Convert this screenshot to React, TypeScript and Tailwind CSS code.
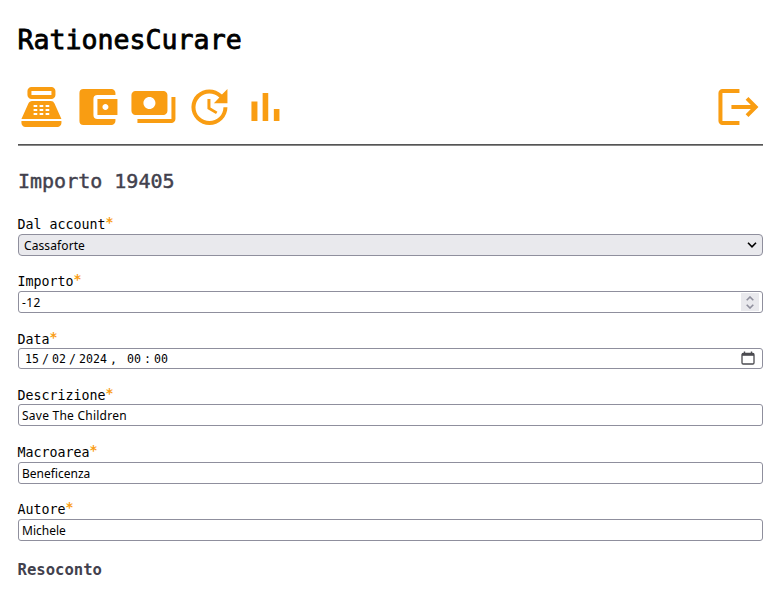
import type { ReactNode } from 'react';
import { MdAccountBalanceWallet, MdPayments, MdPointOfSale, MdUpdate } from 'react-icons/md';

function Field({ label, gap, pad = 'pt-[2px]', children }: { label: string; gap: string; pad?: string; children: ReactNode }) {
  return (
    <div className={gap}>
      <label className={`-ml-[0.5px] flex h-5 items-center text-[13.3px] leading-5 whitespace-pre ${pad}`}>
        {label}
        <span className="-mt-[5px] font-bold text-[#f99d12]">*</span>
      </label>
      {children}
    </div>
  );
}

const box =
  "flex w-full items-center rounded-[3px] border border-[#8f8f9d] bg-white pl-[3px] font-['Noto_Sans',sans-serif] text-[12px]";

const iconView = '-0.22 0 24 24';

export default function App() {
  return (
    <main className="h-[600px] overflow-hidden bg-white pr-[17px] pl-[18px] font-['DejaVu_Sans_Mono',monospace] text-black">
      <h1 className="-ml-[0.5px] pt-5 text-[26.6px] leading-10 [-webkit-text-stroke:0.8px_currentColor]">RationesCurare</h1>
      <nav className="-ml-px mt-[23px] flex h-12 gap-2 text-[#f99d12]">
        <MdPointOfSale size={48} viewBox={iconView} />
        <MdAccountBalanceWallet size={48} viewBox={iconView} />
        <MdPayments size={48} viewBox={iconView} />
        <MdUpdate size={48} viewBox={iconView} />
        <svg width="48" height="48" viewBox={iconView} fill="currentColor">
          <path d="M5 9.2h3V19H5zM10.6 5h2.8v14h-2.8zM16.2 13H19v6h-2.8z" />
        </svg>
        <svg className="mr-[3px] ml-auto" width="48" height="48" viewBox={iconView} fill="currentColor">
          <path d="M5 5h8.5V3H5c-1.1 0-2 .9-2 2v14c0 1.1.9 2 2 2h8.5v-2H5z" />
          <path d="M18 7l-1.4 1.4 2.6 2.6H9.5v2h9.7l-2.6 2.6L18 17l5-5z" />
        </svg>
      </nav>
      <hr className="mt-[13px] h-[2px] border-t border-b border-t-[#555] border-b-[#888]" />
      <h2 className="mt-5 text-[20px] leading-[30px] text-[#42414d] [-webkit-text-stroke:0.45px_currentColor]">Importo 19405</h2>

      <Field label="Dal account" gap="mt-[18px]">
        <div className="flex h-[22px] items-center justify-between rounded-[4px] border border-[#8f8f9d] bg-[#e9e9ed] pr-[5px] pl-[5px] font-['Noto_Sans',sans-serif] text-[12px]">
          <span className="pt-[2px] tracking-[0.1px]">Cassaforte</span>
          <svg width="10" height="6" viewBox="0 0 10 6" fill="none" stroke="#000" strokeWidth="1.6">
            <path d="M1 .8l4 4 4-4" />
          </svg>
        </div>
      </Field>
      <Field label="Importo" gap="mt-[15px]">
        <div className={`${box} h-[22px] justify-between pr-[3px]`}>
          <span className="pt-[2px] tracking-[0.4px]">-12</span>
          <span className="flex h-[18px] w-[18px] flex-col items-center justify-center gap-[3px] bg-[#e9e9ed]">
            <svg width="8" height="5" viewBox="0 0 8 5" fill="none" stroke="#8f8f9d" strokeWidth="1.6">
              <path d="M.7 4.3L4 1l3.3 3.3" />
            </svg>
            <svg width="8" height="5" viewBox="0 0 8 5" fill="none" stroke="#8f8f9d" strokeWidth="1.6">
              <path d="M.7 .7L4 4l3.3-3.3" />
            </svg>
          </span>
        </div>
      </Field>
      <Field label="Data" gap="mt-[15px]" pad="pt-1">
        <div className={`${box} h-[21px] justify-between pr-[7px]`}>
          <span className="flex pt-[2px] pl-[3px] font-['DejaVu_Sans_Mono',monospace] text-[11.6px]">
            <span className="w-[17px]">15</span>
            <span className="w-[10px]">/</span>
            <span className="w-[17px]">02</span>
            <span className="w-[10px]">/</span>
            <span className="w-[31px]">2024</span>
            <span className="w-[17px]">,</span>
            <span className="w-[17px]">00</span>
            <span className="w-[10px]">:</span>
            <span>00</span>
          </span>
          <svg className="mb-[2px]" width="14" height="14" viewBox="0 0 14 14" fill="none" stroke="#4b4b50">
            <rect x="1" y="2.5" width="12" height="10.5" rx="1.2" strokeWidth="1.3" />
            <path d="M1 3.5h12" strokeWidth="2.6" />
            <path d="M3.5 .5v3M10.5 .5v3" strokeWidth="1.4" />
          </svg>
        </div>
      </Field>
      <Field label="Descrizione" gap="mt-[15px]" pad="pt-1">
        <div className={`${box} h-[22px]`}><span className="pt-[2px] tracking-[0.24px]">Save The Children</span></div>
      </Field>
      <Field label="Macroarea" gap="mt-4">
        <div className={`${box} h-[22px]`}><span className="pt-[2px]">Beneficenza</span></div>
      </Field>
      <Field label="Autore" gap="mt-[15px]">
        <div className={`${box} h-[22px]`}><span className="pt-[2px]">Michele</span></div>
      </Field>
      <h3 className="-ml-[0.5px] mt-[17px] text-[15.6px] leading-6 font-bold text-[#42414d]">Resoconto</h3>
    </main>
  );
}
